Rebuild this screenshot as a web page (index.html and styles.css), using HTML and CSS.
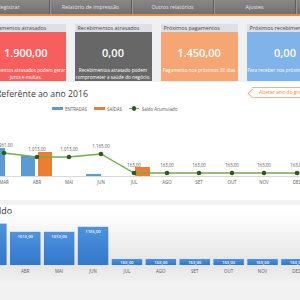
FILE: index.html
```html
<!DOCTYPE html>
<html lang="pt-BR">
<head>
  <meta charset="UTF-8">
  <title>Painel financeiro</title>
  <link rel="stylesheet" href="styles.css">
</head>
<body>

  <!-- Menu superior -->
  <div class="nav">
    <div class="nav-tab">Registrar</div>
    <div class="nav-tab">Relatório de impressão</div>
    <div class="nav-tab">Outros relatórios</div>
    <div class="nav-tab">Ajustes</div>
    <div class="nav-tab"></div>
  </div>

  <!-- Resumo -->
  <div class="summary">
    <div class="card card-red">
      <div class="card-head">Pagamentos atrasados</div>
      <div class="card-body">
        <div class="card-value">1.900,00</div>
        <div class="card-note">Pagamentos atrasados podem gerar<br>juros e multas.</div>
      </div>
    </div>
    <div class="card card-gray">
      <div class="card-head">Recebimentos atrasados</div>
      <div class="card-body">
        <div class="card-value">0,00</div>
        <div class="card-note">Recebimentos atrasado podem<br>comprometer a saúde do negócio.</div>
      </div>
    </div>
    <div class="card card-orange">
      <div class="card-head">Próximos pagamentos</div>
      <div class="card-body">
        <div class="card-value">1.450,00</div>
        <div class="card-note">Pagamento nos próximos 30 dias</div>
      </div>
    </div>
    <div class="card card-blue">
      <div class="card-head">Próximos recebimentos</div>
      <div class="card-body">
        <div class="card-value">0,00</div>
        <div class="card-note">Para receber nos próximos 30 dias</div>
      </div>
    </div>
  </div>

  <!-- Gráfico do ano -->
  <div class="panel report">
    <div class="report-top">
      <h2 class="report-title">Referênte ao ano 2016</h2>
      <button class="year-btn">Alterar ano do gráfico</button>
    </div>
    <div class="legend">
      <span class="legend-item"><i class="swatch swatch-in"></i>ENTRADAS</span>
      <span class="legend-item"><i class="swatch swatch-out"></i>SAÍDAS</span>
      <span class="legend-item"><i class="swatch-line"><i class="swatch-dot"></i></i>Saldo Acumulado</span>
    </div>
    <svg class="chart" width="300" height="78" viewBox="0 112 300 78">
      <line x1="0" y1="176.5" x2="300" y2="176.5" stroke="#d9d9d9" stroke-width="1"/>
      <g fill="#5b9bd5">
        <rect x="-10" y="148" width="15" height="28"/>
        <rect x="21" y="156" width="14" height="20"/>
        <rect x="86" y="174" width="15" height="2"/>
      </g>
      <g fill="#ed7d31">
        <rect x="38" y="152" width="14" height="24"/>
        <rect x="135" y="167" width="15" height="9"/>
      </g>
      <polyline points="-29,150 4,153 37,157 69,157 101,154 134,173 167,173 199,173 232,173 264,173 297,173 330,173" fill="none" stroke="#70ad47" stroke-width="1.3"/>
      <g fill="#2f5a1e">
        <circle cx="4" cy="153" r="2.3"/>
        <circle cx="37" cy="157" r="2.3"/>
        <circle cx="69" cy="157" r="2.3"/>
        <circle cx="101" cy="154" r="2.3"/>
        <circle cx="134" cy="173" r="2.3"/>
        <circle cx="167" cy="173" r="2.3"/>
        <circle cx="199" cy="173" r="2.3"/>
        <circle cx="232" cy="173" r="2.3"/>
        <circle cx="264" cy="173" r="2.3"/>
        <circle cx="297" cy="173" r="2.3"/>
      </g>
      <g class="val" text-anchor="middle">
        <text x="4" y="147">1.261,00</text>
        <text x="37" y="151">1.013,00</text>
        <text x="69" y="151">1.013,00</text>
        <text x="101" y="148">1.165,00</text>
        <text x="134" y="167">163,00</text>
        <text x="167" y="167">163,00</text>
        <text x="199" y="167">163,00</text>
        <text x="232" y="167">163,00</text>
        <text x="264" y="167">163,00</text>
        <text x="297" y="167">163,00</text>
      </g>
      <g class="axis" text-anchor="middle">
        <text x="4" y="184">MAR</text>
        <text x="37" y="184">ABR</text>
        <text x="69" y="184">MAI</text>
        <text x="101" y="184">JUN</text>
        <text x="134" y="184">JUL</text>
        <text x="167" y="184">AGO</text>
        <text x="199" y="184">SET</text>
        <text x="232" y="184">OUT</text>
        <text x="264" y="184">NOV</text>
        <text x="297" y="184">DEZ</text>
      </g>
    </svg>
  </div>

  <!-- Saldo mês a mês -->
  <div class="panel balance">
    <h2 class="balance-title">Saldo</h2>
    <svg class="chart" width="300" height="62" viewBox="0 216 300 62">
      <defs>
        <linearGradient id="barBlue" x1="0" y1="0" x2="0" y2="1">
          <stop offset="0" stop-color="#4d93e0"/>
          <stop offset="1" stop-color="#3277c9"/>
        </linearGradient>
      </defs>
      <g fill="url(#barBlue)">
        <rect x="-23.9" y="223.6" width="30.5" height="41.4"/>
        <rect x="10" y="231.8" width="30.5" height="33.2"/>
        <rect x="43.9" y="231.8" width="30.5" height="33.2"/>
        <rect x="77.8" y="226.8" width="30.5" height="38.2"/>
        <rect x="111.7" y="259" width="30.5" height="6"/>
        <rect x="145.6" y="259" width="30.5" height="6"/>
        <rect x="179.5" y="259" width="30.5" height="6"/>
        <rect x="213.4" y="259" width="30.5" height="6"/>
        <rect x="247.3" y="259" width="30.5" height="6"/>
        <rect x="281.2" y="259" width="30.5" height="6"/>
      </g>
      <g class="bar-val" text-anchor="middle">
        <text x="-8.6" y="230">1261,00</text>
        <text x="25.2" y="238.2">1013,00</text>
        <text x="59.1" y="238.2">1013,00</text>
        <text x="93" y="233.2">1165,00</text>
        <text x="126.9" y="263.6">163,00</text>
        <text x="160.8" y="263.6">163,00</text>
        <text x="194.7" y="263.6">163,00</text>
        <text x="228.6" y="263.6">163,00</text>
        <text x="262.5" y="263.6">163,00</text>
        <text x="296.4" y="263.6">163,00</text>
      </g>
      <g class="axis" text-anchor="middle">
        <text x="25.2" y="273">ABR</text>
        <text x="59.1" y="273">MAI</text>
        <text x="93" y="273">JUN</text>
        <text x="126.9" y="273">JUL</text>
        <text x="160.8" y="273">AGO</text>
        <text x="194.7" y="273">SET</text>
        <text x="228.6" y="273">OUT</text>
        <text x="262.5" y="273">NOV</text>
        <text x="296.4" y="273">DEZ</text>
      </g>
    </svg>
  </div>

</body>
</html>
```

FILE: styles.css
```css
* { box-sizing: border-box; margin: 0; padding: 0; }
body {
  width: 300px;
  height: 300px;
  overflow: hidden;
  background: #f2f2f2;
  color: #444;
  font-family: "Open Sans", sans-serif;
}

/* Menu */
.nav {
  display: flex;
  height: 16px;
  margin-left: -32px;
  background: linear-gradient(#888, #707070);
  border-bottom: 2px solid #f0883a;
}
.nav-tab {
  flex: 0 0 82px;
  border-right: 1px solid #5d5d5d;
  box-shadow: 1px 0 0 #959595;
  color: #e2e2e2;
  font-size: 5.3px;
  line-height: 14px;
  text-align: center;
  white-space: nowrap;
}

/* Cartões de resumo */
.summary {
  display: flex;
  gap: 9px;
  margin-left: -14px;
  padding: 8px 0 1px;
  background: #eef0f2;
}
.card { flex: 0 0 77px; }
.card-head {
  height: 8px;
  padding-left: 3px;
  background: #dde1e7;
  color: #444;
  font-size: 5.4px;
  line-height: 8px;
  white-space: nowrap;
  overflow: hidden;
}
.card-body {
  height: 49px;
  display: flex;
  flex-direction: column;
  align-items: center;
  padding-top: 14px;
  color: #fff;
  text-align: center;
}
.card-value {
  font-size: 11px;
  font-weight: 600;
  line-height: 14px;
}
.card-note {
  margin-top: 7px;
  font-size: 4.7px;
  line-height: 7px;
  white-space: nowrap;
}
.card-red .card-body { background: #f75e5e; }
.card-gray .card-body { background: #676767; }
.card-orange .card-body { background: #f5a673; }
.card-blue .card-body { background: #80b3ea; }

/* Painéis */
.panel { background: #fff; }
.report { padding: 5px 0 10px; }
.report-top {
  display: flex;
  justify-content: space-between;
  align-items: flex-start;
  height: 11px;
}
.report-title {
  margin-left: -4px;
  padding-top: 2px;
  font-size: 8.7px;
  font-weight: normal;
  line-height: 11px;
  color: #3a3a3a;
}
.year-btn {
  position: relative;
  flex-shrink: 0;
  width: 56px;
  height: 11px;
  margin-right: -8px;
  padding-left: 7px;
  background: #fff;
  border: 1px solid #f6b183;
  border-left: none;
  color: #f0883a;
  font-family: "Open Sans", sans-serif;
  font-size: 5px;
  line-height: 9px;
  text-align: left;
  white-space: nowrap;
}
.year-btn::before {
  content: "";
  position: absolute;
  left: -3px;
  top: 1.5px;
  width: 6px;
  height: 6px;
  border-left: 1px solid #f6b183;
  border-bottom: 1px solid #f6b183;
  background: #fff;
  transform: rotate(45deg);
}

.legend {
  display: flex;
  align-items: center;
  gap: 7px;
  height: 5px;
  margin-top: 8px;
  padding-left: 52px;
  color: #595959;
  font-size: 4.4px;
}
.legend-item {
  display: flex;
  align-items: center;
  gap: 2px;
}
.swatch { width: 11px; height: 3px; }
.swatch-in { background: #5b9bd5; }
.swatch-out { background: #ed7d31; }
.swatch-line {
  position: relative;
  width: 10px;
  height: 1.3px;
  margin-right: 1px;
  background: #70ad47;
}
.swatch-dot {
  position: absolute;
  left: 3px;
  top: -1.7px;
  width: 4.6px;
  height: 4.6px;
  border-radius: 50%;
  background: #2f5a1e;
}

.chart {
  display: block;
  margin-top: 1px;
  overflow: hidden;
  font-family: "Open Sans", sans-serif;
}
.report .chart { margin-top: 1px; }
.val text { font-size: 4.4px; fill: #595959; }
.axis text { font-size: 4.4px; fill: #595959; }
.bar-val text { font-size: 4.2px; font-weight: 600; fill: #fff; }

.balance {
  height: 82px;
  margin-top: 5px;
  background: linear-gradient(#fff 8%, #e5e5e5 72%, #f4f4f4 100%);
}
.balance-title {
  margin-left: -11px;
  font-size: 9px;
  font-weight: normal;
  line-height: 11px;
  color: #3a3a3a;
}
.balance .chart { margin-top: 0; }
```
